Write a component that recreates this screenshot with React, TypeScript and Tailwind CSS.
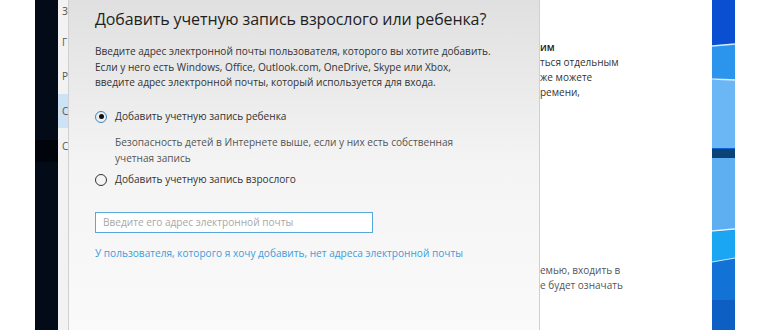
import React from 'react';

const font = { fontFamily: '"Open Sans", "Noto Sans", sans-serif' };

const Wallpaper = () => (
  <svg width="23" height="330" viewBox="0 0 23 330" className="block">
    <rect x="0" y="0" width="23" height="330" fill="#0d62d8" />
    <rect x="0" y="0" width="23" height="46" fill="#0a4fd2" />
    <polygon points="0,46 23,44 23,80 0,78" fill="#2b95ee" />
    <polygon points="0,80 23,79 23,148 0,148" fill="#6bb6f4" />
    <rect x="0" y="149" width="23" height="9" fill="#0b4377" />
    <polygon points="0,158 23,158 23,229 0,231" fill="#5daff2" />
    <polygon points="0,232 23,230 23,258 0,262" fill="#1aa6f2" />
    <polygon points="0,262 23,258 23,330 0,330" fill="#1272d6" />
    <line x1="0" y1="46" x2="23" y2="44" stroke="#d7ecff" strokeWidth="1.5" />
    <line x1="0" y1="79" x2="23" y2="80" stroke="#d7ecff" strokeWidth="1.5" />
    <line x1="0" y1="231" x2="23" y2="229" stroke="#e6f4ff" strokeWidth="1.5" />
    <line x1="0" y1="262" x2="23" y2="258" stroke="#cde8ff" strokeWidth="1" />
    <rect x="0" y="300" width="23" height="30" fill="#0d5fc4" />
  </svg>
);

const Radio = ({ checked }: { checked?: boolean }) => (
  <span
    className={
      checked
        ? 'flex h-[12px] w-[12px] shrink-0 items-center justify-center rounded-full border-[1.5px] border-[#3a84c8]'
        : 'flex h-[12px] w-[12px] shrink-0 items-center justify-center rounded-full border-[1.5px] border-[#333]'
    }
  >
    {checked && <span className="h-[5px] w-[5px] rounded-full bg-[#111]" />}
  </span>
);

export default function App() {
  return (
    <div className="relative flex h-[330px] w-[770px] overflow-hidden bg-white" style={font}>
      <div className="w-[35px] bg-white" />
      <div className="flex w-[23px] flex-col bg-[#030b18]">
        <div className="h-[140px]" />
        <div className="h-[22px] bg-[#01050b]" />
      </div>

      {/* settings window behind the dialog, only its edges show */}
      <div className="flex w-[654px] bg-white">
        <div className="flex w-[10px] flex-col bg-[#f2f2f2] pt-[2px] text-[10px] leading-[16px] text-[#555]">
          <div className="h-[32px] pl-[4px] pt-[1px]">З</div>
          <div className="h-[34px] pl-[4px]">Г</div>
          <div className="h-[26px] pl-[4px]">Р</div>
          <div className="flex h-[34px] items-center bg-[#cde2f4] pl-[4px]">С</div>
          <div className="h-[34px] pl-[4px] pt-[10px]">С</div>
        </div>
        <div className="flex flex-1 flex-col pl-[472px] pt-[40px] text-[10px] leading-[15px] whitespace-nowrap text-[#333]">
          <div className="font-semibold text-[#222]">им</div>
          <div>ться отдельным</div>
          <div>же можете</div>
          <div>ремени,</div>
          <div className="mt-[163px] text-[#555]">емью, входить в</div>
          <div className="text-[#555]">е будет означать</div>
        </div>
      </div>

      <div className="w-[23px]">
        <Wallpaper />
      </div>
      <div className="flex-1 bg-white" />

      {/* dialog */}
      <div className="absolute left-[68px] top-0 h-[330px] w-[472px] border-l border-r border-[#d0d0d0] bg-gradient-to-b from-[#e0e0e0] via-[#f4f4f4] to-[#fafafa] pl-[26px]">
        <h1 className="pt-[6px] text-[16px] leading-[26px] tracking-[-0.1px] whitespace-nowrap text-[#1e1e1e]">
          Добавить учетную запись взрослого или ребенка?
        </h1>
        <p className="mt-[12px] text-[10.1px] leading-[15.5px] whitespace-nowrap text-[#333]">
          Введите адрес электронной почты пользователя, которого вы хотите добавить.
          <br />
          Если у него есть Windows, Office, Outlook.com, OneDrive, Skype или Xbox,
          <br />
          введите адрес электронной почты, который используется для входа.
        </p>

        <label className="mt-[18px] flex h-[16px] items-center gap-[8px] text-[10.1px] text-[#333]">
          <Radio checked />
          Добавить учетную запись ребенка
        </label>
        <p className="mt-[10.5px] pl-[20px] text-[10.1px] leading-[15.5px] text-[#555]">
          Безопасность детей в Интернете выше, если у них есть собственная
          <br />
          учетная запись
        </p>
        <label className="mt-[6px] flex h-[16px] items-center gap-[8px] text-[10.1px] text-[#333]">
          <Radio />
          Добавить учетную запись взрослого
        </label>

        <div className="mt-[24px] flex h-[21px] w-[278px] items-center border-[1.5px] border-[#58a8dc] bg-white px-[7px] text-[10.1px] text-[#a8a8a8]">
          Введите его адрес электронной почты
        </div>
        <a className="mt-[12px] block text-[10.1px] leading-[16px] text-[#3d9ddb]">
          У пользователя, которого я хочу добавить, нет адреса электронной почты
        </a>
      </div>
    </div>
  );
}
